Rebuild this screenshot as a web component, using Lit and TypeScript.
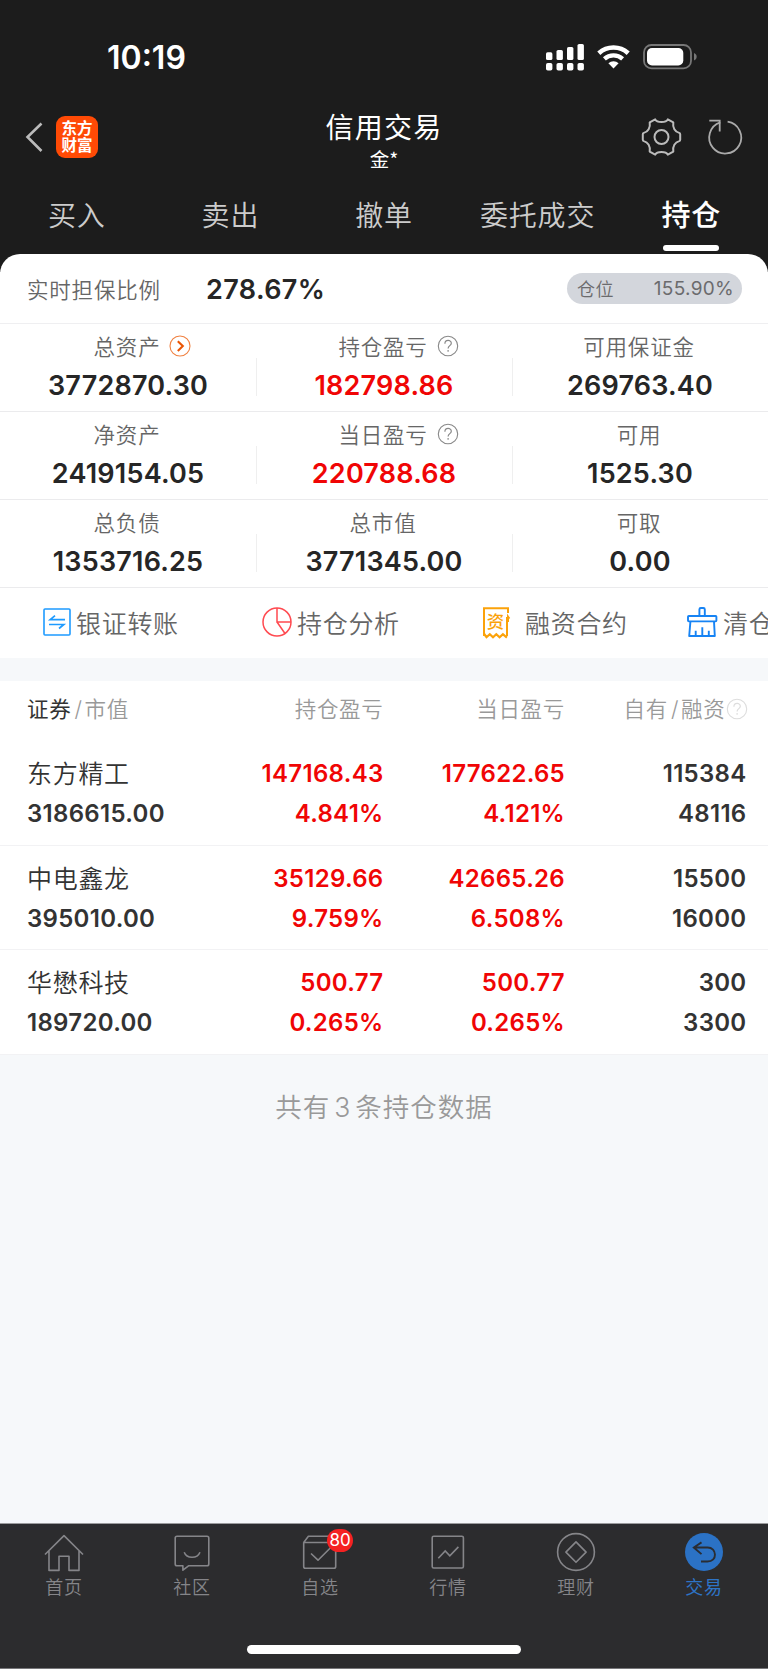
import { LitElement, html, css, svg, nothing } from "lit";
import { customElement, property } from "lit/decorators.js";

const icons: Record<string, unknown> = {
  back: svg`<path d="M15.500 1.500 1.500 15l14 14" fill="none" stroke="#bbb" stroke-width="2.6"/>`,
  signal: svg`<g fill="#fff"><rect x="0" y="8.300" width="6.400" height="7.700" rx="1.600"/><rect x="10.500" y="6" width="6.400" height="10" rx="1.600"/><rect x="21" y="3" width="6.400" height="13" rx="1.600"/><rect x="31.500" y="0" width="6.400" height="16" rx="1.600"/><rect x="0" y="19" width="6.400" height="7.500" rx="1.800"/><rect x="10.500" y="19" width="6.400" height="7.500" rx="1.800"/><rect x="21" y="19" width="6.400" height="7.500" rx="1.800"/><rect x="31.500" y="19" width="6.400" height="7.500" rx="1.800"/></g>`,
  wifi: svg`<g fill="none" stroke="#fff" stroke-width="4.600"><path d="M1.800 9.200a22 22 0 0 1 29.400 0"/><path d="M7.400 14.900a13.500 13.500 0 0 1 18.200 0" stroke-width="4.300"/></g><path d="M11.400 19.200a7.600 7.600 0 0 1 10.200 0L16.500 24.500Z" fill="#fff"/>`,
  battery: svg`<rect x="1" y="1" width="47" height="23.400" rx="7.500" fill="none" stroke="#777" stroke-width="1.800"/><rect x="4" y="4" width="36.300" height="17.400" rx="5" fill="#fff"/><path d="M51 9c3.600 1.400 3.600 6 0 7.600Z" fill="#777"/>`,
  gear: svg`<g fill="none" stroke="#bbb" stroke-width="2"><path stroke-linejoin="round" d="M13.200 1.400C15 5 24 5 25.800 1.400L31.300 4.400C30.400 9.600 33 13.900 37.200 14.900Q38.200 15.200 38.200 16.200V21.800Q38.200 22.800 37.200 23.100C33 24.100 30.400 28.400 31.300 33.600L25.800 36.600C24 33 15 33 13.200 36.600L7.700 33.600C8.600 28.400 6 24.100 1.800 23.100Q.8 22.800 .8 21.800V16.200Q.8 15.200 1.800 14.900C6 13.900 8.600 9.600 7.700 4.400Z"/><circle cx="19.500" cy="19" r="7"/></g>`,
  refresh: svg`<g fill="none" stroke="#aaa" stroke-width="1.800"><path d="M20.600 2.700a16 16 0 1 1-7.300.6"/><path d="M2.300 1.600h10.400v11"/></g>`,
  more: svg`<circle cx="11" cy="11" r="10" fill="none" stroke="#f08040" stroke-width="1.100"/><path d="m8.800 6.300 5 4.800-5 4.800" fill="none" stroke="#ea5504" stroke-width="2.100"/>`,
  help: svg`<circle cx="11" cy="11" r="9.700" fill="none" stroke="currentColor" stroke-width="1.100"/><path d="M7.900 8.800c0-4.500 6.400-4.300 6.400-.6 0 2.500-3.200 2.400-3.200 5.300M11.100 15v1.800" fill="none" stroke="currentColor" stroke-width="1.200"/>`,
  transfer: svg`<g fill="none" stroke="#1e9bff"><rect x="1" y="1" width="26" height="26" rx="1" stroke-width="1.600"/><path stroke-width="1.700" d="M22 11.600H7.200l4.800-4M6 16.500h14.800l-4.800 4"/></g>`,
  pie: svg`<g fill="none" stroke="#ff4a50" stroke-width="1.500"><circle cx="15" cy="15" r="14"/><path d="M15 1v14h14M15 15l8 11.500"/></g>`,
  contract: svg`<g><path d="M1 29V1.200h24V6M24 10v19" fill="none" stroke="#fba20a" stroke-width="2"/><path d="M24 6.500 27.200 11l-1.200 1v3h-2Z" fill="#fba20a"/><path d="m1.200 27 2.300 3.200 3.300-3 3.200 3 3.300-3 3.300 3 3.300-3 4 3.500" fill="none" stroke="#fba20a" stroke-width="2.200"/><text x="12.800" y="20.600" text-anchor="middle" font-size="17.500" font-weight="500" font-family="Noto Sans CJK SC, sans-serif" fill="#fba20a">资</text></g>`,
  broom: svg`<g fill="none" stroke="#1683f4" stroke-width="1.900" stroke-linejoin="round"><path d="M12.400 9V2.400q0-1.400 1.400-1.400h2.600q1.400 0 1.400 1.400V9"/><rect x="1" y="9" width="28.400" height="5.400" rx=".8"/><path d="M3.400 14.600 2.200 29h25.600l-.8-14.400M8.700 28.500v-4.800M15.300 28.500v-8.200M21.800 28.500v-4.800"/></g>`,
  home: svg`<path d="M1 20.500 20 1.600l19 18.900M5 17v19.400h10V22.300h10v14.100h10V17" fill="none" stroke="currentColor" stroke-width="1.600" stroke-linejoin="round"/>`,
  chat: svg`<g fill="none" stroke="currentColor" stroke-width="1.600" stroke-linejoin="round"><path d="M5 2.200h30q1.800 0 1.800 1.800v26q0 1.800-1.800 1.800H16.500l-5.600 4.400v-4.400H5q-1.800 0-1.800-1.800V4q0-1.800 1.800-1.800Z"/><path d="M12.200 18.200c2.500 6.600 13 6.800 15.800 0"/></g>`,
  pick: svg`<g fill="none" stroke="currentColor" stroke-width="1.600" stroke-linejoin="round"><path d="M3.700 8.500h32v24q0 1.800-1.800 1.800H5.500q-1.800 0-1.800-1.800ZM3.700 8.500l4.700-6.200h24l3.300 6.200"/><path d="m11 19.500 7 6.700 13.500-13.400"/></g>`,
  market: svg`<g fill="none" stroke="currentColor" stroke-width="1.600"><rect x="4.200" y="2.200" width="31.200" height="31.800" rx="1.500"/><path d="m10.300 24.200 6.900-7.300 4.600 5 8.600-9"/></g>`,
  wealth: svg`<g fill="none" stroke="currentColor" stroke-width="1.600" stroke-linejoin="round"><circle cx="20" cy="18" r="18.400"/><path d="m20 7.900 10.100 10.200L20 28.300 9.900 18.100Z"/></g>`,
  trade: svg`<circle cx="20" cy="18" r="19" fill="#2b72c5"/><path d="M17 27.500h6.400c10.500 0 9.600-14 .2-14H9.800M17.500 8.400 9.800 13.500l7.700 6.600" fill="none" stroke="#2a2d33" stroke-width="1.900"/>`,
};

@customElement("app-icon")
class AppIcon extends LitElement {
  @property() name = "";
  @property({ type: Number }) w = 22;
  @property({ type: Number }) h = 22;
  static styles = css`
    :host { display: block; flex: none; }
    svg { display: block; overflow: visible; }
  `;
  render() {
    return html`<svg width=${this.w} height=${this.h} viewBox="0 0 ${this.w} ${this.h}">${icons[this.name]}</svg>`;
  }
}

const tabs = ["买入", "卖出", "撤单", "委托成交", "持仓"];

const stats = [
  [["总资产", "3772870.30", "more"], ["持仓盈亏", "182798.86", "help"], ["可用保证金", "269763.40", ""]],
  [["净资产", "2419154.05", ""], ["当日盈亏", "220788.68", "help"], ["可用", "1525.30", ""]],
  [["总负债", "1353716.25", ""], ["总市值", "3771345.00", ""], ["可取", "0.00", ""]],
];

const holdings = [
  ["东方精工", "3186615.00", "147168.43", "4.841%", "177622.65", "4.121%", "115384", "48116"],
  ["中电鑫龙", "395010.00", "35129.66", "9.759%", "42665.26", "6.508%", "15500", "16000"],
  ["华懋科技", "189720.00", "500.77", "0.265%", "500.77", "0.265%", "300", "3300"],
];

const nav = [
  ["home", "首页"], ["chat", "社区"], ["pick", "自选"], ["market", "行情"], ["wealth", "理财"], ["trade", "交易"],
];

@customElement("app-root")
class AppRoot extends LitElement {
  static styles = css`
    :host {
      display: flex; flex-direction: column; width: 768px; height: 1669px; overflow: hidden;
      background: #f6f8fa; color: #262626;
      font-family: Inter, "Noto Sans CJK SC", sans-serif; white-space: nowrap;
    }
    * { box-sizing: border-box; }
    .top { flex: none; height: 272px; background: #1c1c1c; color: #fff; }
    .status { height: 94px; display: flex; align-items: center; padding: 20px 71px 0 107px; }
    .time { font-size: 32px; font-weight: 600; line-height: 40px; flex: 1; padding-top: 1px; }
    .sys { display: flex; align-items: center; }
    .wifi { margin: 0 13px 0 13px; }
    .title-bar { height: 85px; display: grid; grid-template-columns: 1fr auto 1fr; align-items: center; padding: 0 26px; }
    .left { display: flex; align-items: center; gap: 13px; }
    .logo {
      width: 42px; height: 42px; border-radius: 9px; background: #ff4a05; display: grid;
      place-content: center; font: 700 15.500px/17px "Noto Sans CJK SC", sans-serif; text-align: center; padding-bottom: 1px;
    }
    .title { text-align: center; }
    .name { font: 400 28px/36px "Noto Sans CJK SC", sans-serif; letter-spacing: 1.300px; margin-top: 8px; }
    .user { font: 400 19.500px/30px "Noto Sans CJK SC", sans-serif; }
    .right { display: flex; align-items: center; justify-content: flex-end; gap: 26px; }
    .refresh { margin-right: 1px; }
    .tabs { height: 75px; display: grid; grid-template-columns: repeat(5, 1fr); padding-top: 15px; }
    .tab { display: flex; flex-direction: column; align-items: center; font-size: 28px; line-height: 44px; letter-spacing: 0.800px; color: #ccc; font-weight: 350; }
    .active { color: #fff; font-weight: 500; font-size: 29px; }
    .active::after { content: ""; width: 56px; height: 6px; border-radius: 3px; background: #fff; margin-top: 7px; }
    .panel { flex: none; margin-top: -18px; background: #fff; border-radius: 20px 20px 0 0; }
    .ratio { height: 70px; display: flex; align-items: center; padding: 0 26px 0 27px; border-bottom: 1px solid #efeff1; }
    .ratio-label { font-size: 21.500px; letter-spacing: 0.800px; color: #666; font-weight: 350; width: 179px; }
    .ratio-value { font-size: 27px; font-weight: 600; flex: 1; letter-spacing: 0.400px; padding-top: 1px; }
    .pill { width: 175px; height: 31px; border-radius: 16px; background: #d3d6dc; color: #6b6b6d; display: flex; align-items: center; justify-content: space-between; padding: 0 8px 0 10px; }
    .pill-name { font-size: 18px; font-weight: 350; letter-spacing: 0.500px; padding-bottom: 1px; }
    .pill-value { font-size: 19px; letter-spacing: 0.300px; }
    .stats { height: 88px; display: grid; grid-template-columns: repeat(3, 1fr); border-bottom: 1px solid #ebebed; }
    .stat { display: flex; flex-direction: column; align-items: center; padding-top: 6px; }
    .stat + .stat { background: linear-gradient(#efefef, #efefef) no-repeat 0 34px / 1px 38px; }
    .stat-label { display: flex; align-items: center; font-size: 21.500px; line-height: 34px; letter-spacing: 0.800px; color: #666; font-weight: 350; margin-right: 2px; }
    .stat-icon { margin: -3px -31px 0 9px; color: #888; }
    .stat-value { font-size: 27px; line-height: 34px; margin-top: 5px; font-weight: 600; letter-spacing: 0.200px; }
    .red, .stat-value.red { color: #f00505; }
    .actions { height: 70px; display: flex; align-items: center; padding: 0 0 2px 43px; overflow: hidden; color: #666; font-size: 25px; font-weight: 350; letter-spacing: 0.700px; }
    .action { display: flex; align-items: center; flex: none; width: 219px; gap: 5px; }
    .action.gap { width: 206px; gap: 14px; padding-left: 2px; }
    .table { flex: none; margin-top: 23px; background: #fff; }
    .row { display: grid; grid-template-columns: 200px 156.500px 181.500px 181.500px; padding-left: 27px; text-align: right; }
    .row > :first-child { text-align: left; }
    .head { height: 60px; line-height: 56px; font-size: 21.500px; color: #999; letter-spacing: 0.700px; font-weight: 350; }
    .dark { color: #333; font-weight: 400; }
    .slash { margin: 0 2px 0 3px; }
    .owned { display: flex; align-items: center; justify-content: flex-end; height: 56px; }
    .faint { color: #ddd; margin-right: -1px; }
    .holding { height: 104.500px; padding-top: 13px; border-bottom: 1px solid #f2f2f4; }
    .cell { font-size: 24px; font-weight: 600; line-height: 40px; color: #333; letter-spacing: 0.300px; }
    .red.cell { color: #f00505; }
    .stock { display: block; font-size: 25px; font-weight: 350; letter-spacing: 0.700px; }
    .line { display: block; }
    .count { text-align: center; font-size: 26.500px; line-height: 40px; color: #999; margin-top: 32px; letter-spacing: 1px; font-weight: 350; flex: 1; }
    .num { margin: 0 4px; }
    .nav { flex: none; height: 146px; background: #2c2c2e; border-top: 1px solid #9b9b9d; border-bottom: 1px solid #77777a; display: flex; flex-direction: column; align-items: center; }
    .items { display: grid; grid-template-columns: repeat(6, 1fr); width: 100%; height: 121px; padding-top: 10px; }
    .item { display: flex; flex-direction: column; align-items: center; position: relative; color: #858589; font-size: 18px; line-height: 26px; letter-spacing: 0.800px; font-weight: 350; }
    .item-label { margin-top: 4px; }
    .chosen { color: #2e74c6; font-weight: 400; }
    .badge { position: absolute; left: 71px; top: -5px; width: 26px; height: 23px; border-radius: 12px; background: #f52222; color: #fff; font-size: 17px; line-height: 23px; text-align: center; letter-spacing: 0; font-weight: 400; }
    .handle { width: 274px; height: 9px; border-radius: 5px; background: #fff; }
  `;
  render() {
    return html`
      <div class="top">
        <div class="status">
          <span class="time">10:19</span>
          <div class="sys">
            <app-icon name="signal" w="38" h="27"></app-icon>
            <app-icon class="wifi" name="wifi" w="33" h="27"></app-icon>
            <app-icon name="battery" w="54" h="25.4"></app-icon>
          </div>
        </div>
        <div class="title-bar">
          <div class="left"><app-icon name="back" w="17" h="30"></app-icon><div class="logo"><span>东方</span><span>财富</span></div></div>
          <div class="title"><div class="name">信用交易</div><div class="user">金*</div></div>
          <div class="right"><app-icon name="gear" w="39" h="38"></app-icon><app-icon class="refresh" name="refresh" w="34" h="36"></app-icon></div>
        </div>
        <div class="tabs">${tabs.map((t) => html`<div class="tab ${t === "持仓" ? "active" : ""}">${t}</div>`)}</div>
      </div>
      <div class="panel">
        <div class="ratio">
          <span class="ratio-label">实时担保比例</span><span class="ratio-value">278.67%</span>
          <div class="pill"><span class="pill-name">仓位</span><span class="pill-value">155.90%</span></div>
        </div>
        ${stats.map((row) => html`<div class="stats">${row.map(([label, value, icon]) => html`
          <div class="stat">
            <div class="stat-label">${label}${icon ? html`<app-icon class="stat-icon" name=${icon}></app-icon>` : nothing}</div>
            <div class="stat-value ${icon === "help" ? "red" : ""}">${value}</div>
          </div>`)}</div>`)}
        <div class="actions">
          <div class="action"><app-icon name="transfer" w="28" h="28"></app-icon>银证转账</div>
          <div class="action"><app-icon name="pie" w="30" h="30"></app-icon>持仓分析</div>
          <div class="action gap"><app-icon name="contract" w="28" h="31"></app-icon>融资合约</div>
          <div class="action"><app-icon name="broom" w="31" h="30"></app-icon>清仓</div>
        </div>
      </div>
      <div class="table">
        <div class="row head">
          <span><span class="dark">证券</span><span class="slash">/</span>市值</span>
          <span>持仓盈亏</span><span>当日盈亏</span>
          <span class="owned">自有<span class="slash">/</span>融资<app-icon class="faint" name="help"></app-icon></span>
        </div>
        ${holdings.map((h) => html`<div class="row holding">
          <div class="cell"><span class="stock">${h[0]}</span><span class="line">${h[1]}</span></div>
          <div class="cell red"><span class="line">${h[2]}</span><span class="line">${h[3]}</span></div>
          <div class="cell red"><span class="line">${h[4]}</span><span class="line">${h[5]}</span></div>
          <div class="cell"><span class="line">${h[6]}</span><span class="line">${h[7]}</span></div>
        </div>`)}
      </div>
      <div class="count">共有<span class="num">3</span>条持仓数据</div>
      <div class="nav">
        <div class="items">${nav.map(([icon, label]) => html`
          <div class="item ${icon === "trade" ? "chosen" : ""}">
            <app-icon name=${icon} w="40" h="37"></app-icon>
            <span class="item-label">${label}</span>
            ${icon === "pick" ? html`<span class="badge">80</span>` : nothing}
          </div>`)}</div>
        <div class="handle"></div>
      </div>
    `;
  }
}
